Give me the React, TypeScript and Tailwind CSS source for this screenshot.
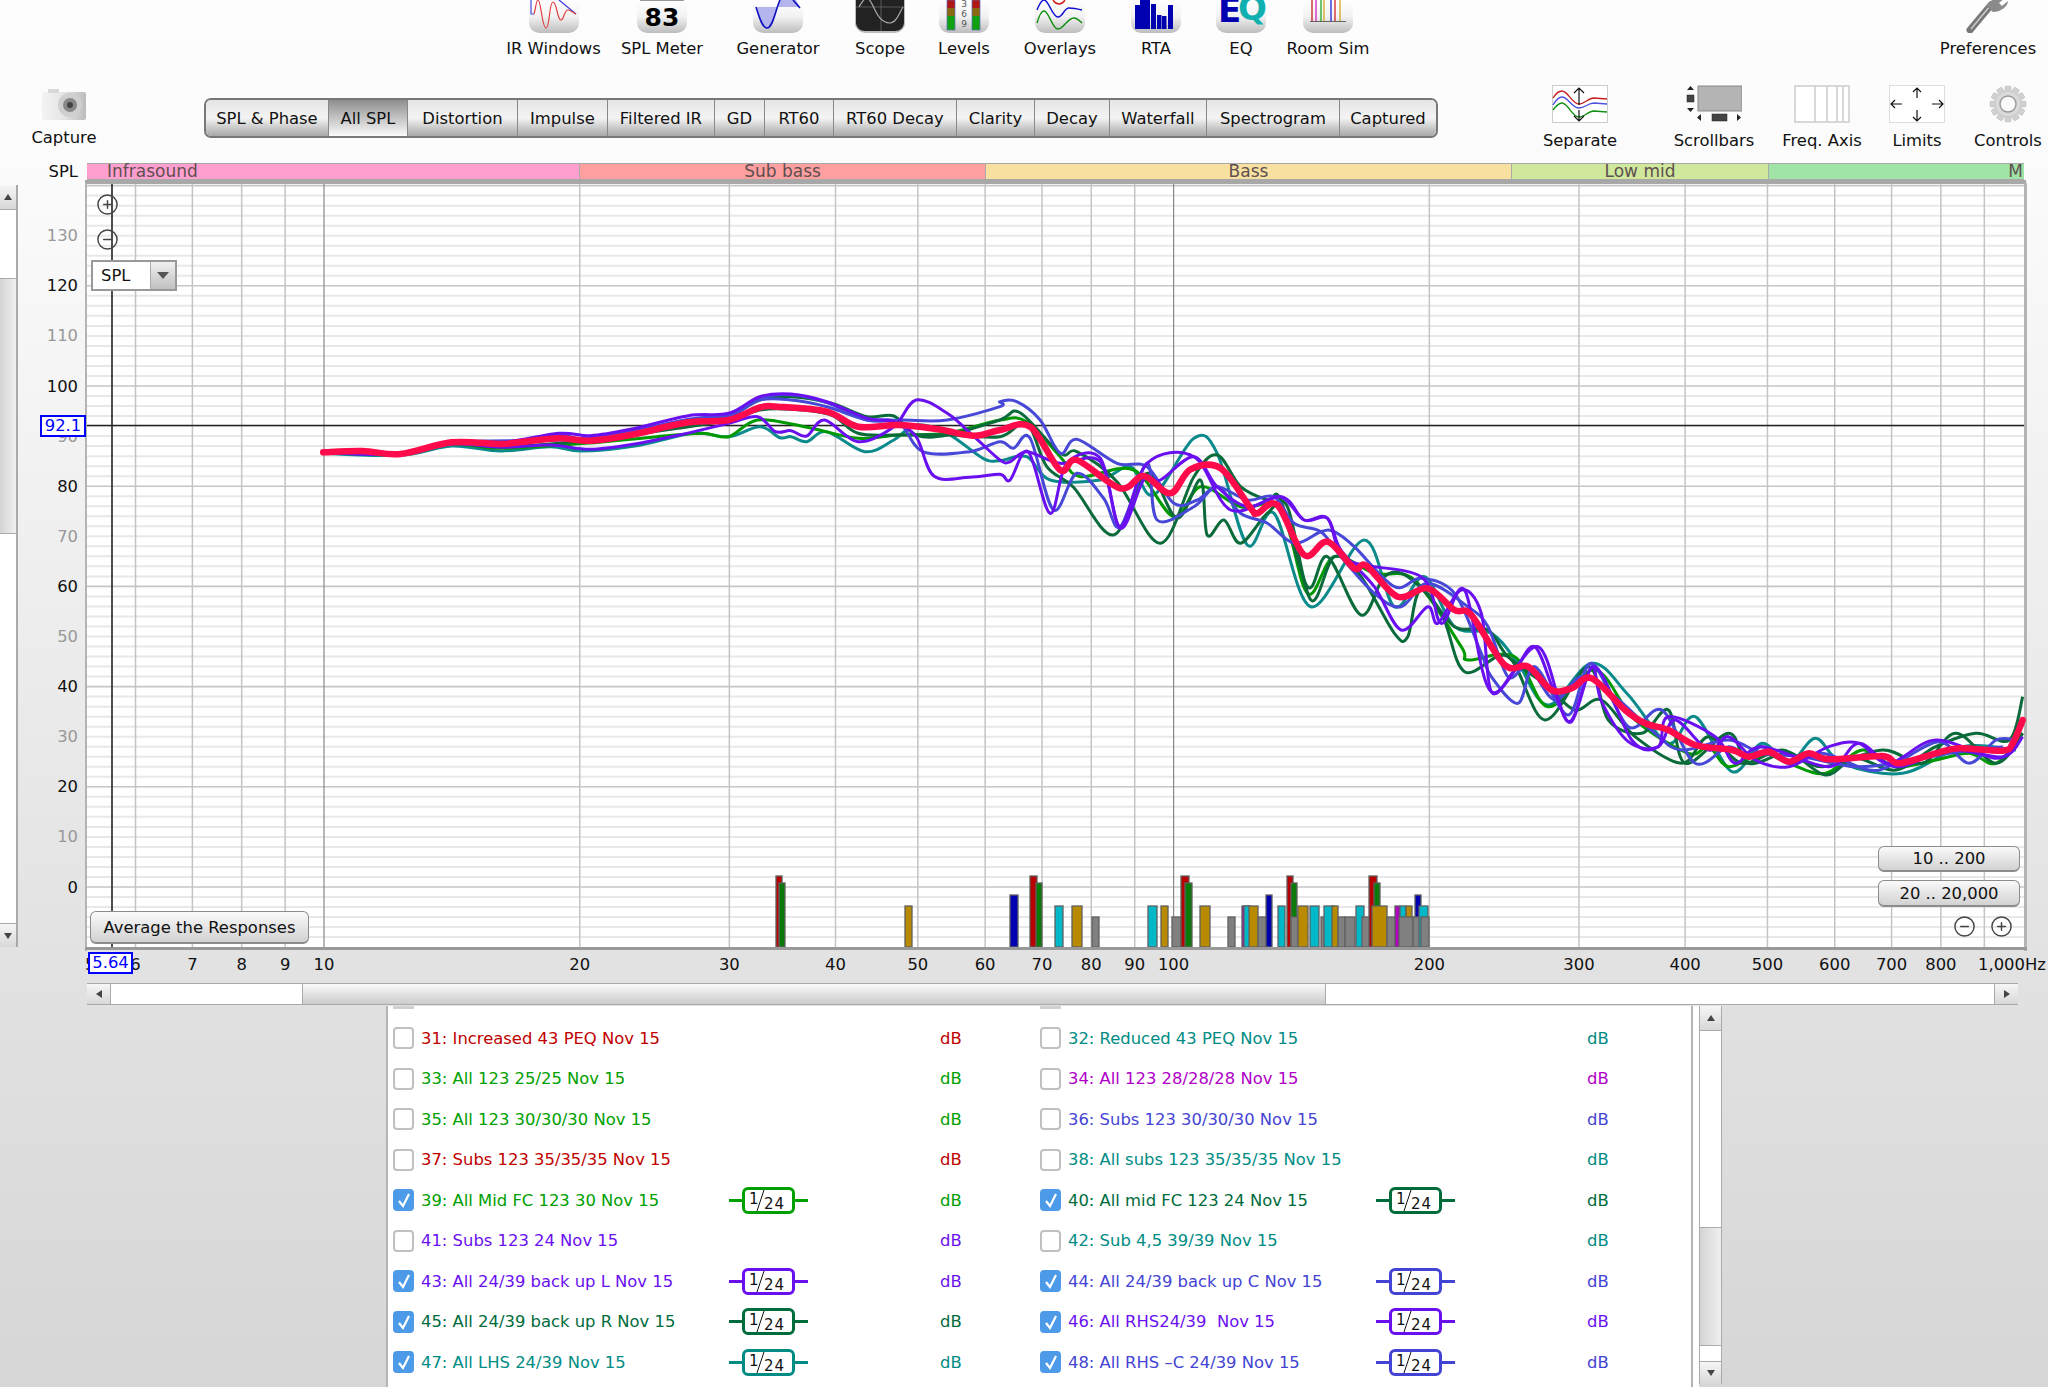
import React from 'react';
import { CirclePlus, CircleMinus } from 'lucide-react';

// ---------- chart helpers (page coordinates) ----------
const fx = (f: number) => 324 + 849.6 * (Math.log10(f) - 1);
const dy = (d: number) => 386 + (100 - d) * 5.01;

const smooth = (p: number[][]) => {
  let d = `M${p[0][0]} ${p[0][1]}`;
  for (let i = 0; i < p.length - 1; i++) {
    const a = p[Math.max(i - 1, 0)], b = p[i], c = p[i + 1], e = p[Math.min(i + 2, p.length - 1)];
    d += `C${(b[0] + (c[0] - a[0]) / 6).toFixed(1)} ${(b[1] + (c[1] - a[1]) / 6).toFixed(1)} ${(c[0] - (e[0] - b[0]) / 6).toFixed(1)} ${(c[1] - (e[1] - b[1]) / 6).toFixed(1)} ${c[0].toFixed(1)} ${c[1].toFixed(1)}`;
  }
  return d;
};

// points read off the two chart crops
const trace = (a: number[], b: number[]) => {
  const out: number[][] = [];
  for (let i = 0; i < a.length; i += 2) out.push([300 + a[i] / 2.24, 370 + a[i + 1] / 3]);
  for (let i = 0; i < b.length; i += 2) out.push([1000 + b[i] / 1.496, 400 + b[i + 1] / 3]);
  return out;
};

const curves: { c: string; p: number[][] }[] = [
  { c: '#0a8a8a', p: trace(
    [52,250,225,256,340,228,450,243,560,230,630,243,750,228,880,190,960,200,1030,170,1075,203,1100,200,1135,215,1180,185,1265,245,1330,210,1380,165,1450,190,1530,265,1568,272],
    [40,170,75,240,150,240,195,200,230,285,290,115,325,160,370,435,410,340,465,620,545,420,590,620,635,530,680,680,735,700,775,790,820,915,885,790,940,885,1000,1030,1040,950,1095,1115,1140,1030,1180,1090,1220,1015,1260,1090,1350,1120,1440,1040,1520,1050]) },
  { c: '#009a00', p: trace(
    [52,247,225,252,340,222,450,235,640,220,800,200,900,190,960,200,1025,150,1130,170,1250,205,1340,195,1450,190],
    [0,60,40,65,90,170,120,230,200,210,260,350,300,260,360,320,420,330,460,580,500,470,560,520,620,540,690,740,700,780,770,770,820,920,890,810,950,960,1030,1060,1060,1040,1090,1100,1140,1060,1180,1090,1235,1120,1290,1050,1340,1100,1400,1080,1450,1060,1490,1090,1530,1000]) },
  { c: '#0a6a3a', p: trace(
    [52,247,225,252,340,216,450,222,580,200,650,208,870,150,960,138,1030,90,1100,80,1190,100,1270,140,1330,138,1380,195,1450,195,1568,150],
    [30,38,90,160,115,155,175,245,240,430,290,230,325,165,360,260,400,300,420,300,460,560,490,470,540,645,575,530,610,530,660,640,695,815,760,770,815,960,880,800,910,960,960,1000,1000,930,1025,1090,1090,1000,1120,1090,1180,1060,1235,1125,1280,1075,1340,1110,1400,1040,1460,1000,1510,1020,1530,890]) },
  { c: '#0a6a3a', p: trace(
    [52,247,225,252,340,220,450,230,640,212,870,170,960,150,1030,120,1100,118,1190,135,1250,190,1340,195,1450,195],
    [0,110,40,70,70,200,110,262,170,405,220,220,265,355,300,240,310,405,335,360,360,430,400,340,430,320,465,600,500,470,540,530,590,700,610,710,630,570,680,680,730,690,760,770,820,860,860,930,900,900,950,1010,1020,1090,1060,1010,1110,1090,1170,1050,1230,1100,1320,1050,1380,1090,1430,1000,1490,1090,1530,1000]) },
  { c: '#4848d8', p: trace(
    [52,247,225,252,340,214,450,220,580,195,650,205,870,150,960,140,1030,90,1100,90,1180,110,1270,150,1340,155,1395,245,1500,245,1568,215],
    [20,145,45,115,80,330,115,220,155,295,180,380,220,190,235,360,290,320,325,260,360,340,400,370,440,430,480,395,500,395,530,440,590,560,630,535,680,580,720,760,735,830,775,910,800,800,850,945,885,790,940,980,990,930,1040,1090,1090,1040,1120,1075,1140,1040,1180,1090,1230,1060,1300,1110,1340,1090,1405,1025,1450,1090,1490,1020,1520,1020]) },
  { c: '#4848d8', p: trace(
    [52,247,225,252,340,216,650,205,870,148,960,135,1030,85,1100,74,1180,98,1270,150,1350,150,1450,150,1568,110],
    [0,5,25,5,60,60,90,160,115,118,175,190,220,200,260,310,295,300,325,260,370,300,410,290,440,370,480,395,510,470,560,580,600,620,640,550,700,620,730,680,760,830,790,800,830,900,870,830,920,890,980,1000,1020,1050,1090,1020,1140,1060,1200,1070,1280,1100,1350,1085,1420,1060,1500,1040]) },
  { c: '#6a10f0', p: trace(
    [52,247,225,252,340,213,450,218,580,190,650,197,740,178,870,137,960,130,1030,80,1100,72,1180,95,1270,145,1330,155,1380,200,1420,318,1500,322,1568,313],
    [15,240,42,155,75,340,100,190,150,175,180,385,215,240,240,240,290,170,325,260,370,320,420,290,455,360,490,355,510,450,560,560,600,690,640,620,655,670,690,570,720,640,735,875,770,810,800,740,830,880,855,965,885,800,900,905,940,1025,985,1040,1010,960,1060,1050,1090,1010,1130,1080,1180,1100,1240,1040,1285,1030,1330,1090,1400,1020,1490,1075,1520,1030]) },
  { c: '#6a10f0', p: trace(
    [52,247,225,252,340,222,450,232,560,225,650,238,750,222,850,195,960,160,1025,140,1065,185,1100,182,1135,198,1175,150,1250,215,1330,170,1380,90,1450,130,1510,200,1568,270],
    [15,185,40,155,90,190,150,185,180,380,220,190,290,170,345,330,420,290,455,360,490,355,520,480,630,530,660,670,695,570,735,875,805,740,850,965,890,800,945,1020,985,1040,1000,950,1070,1010,1100,1090,1140,1040,1240,1100,1285,1030,1340,1100,1420,1050,1500,1070,1530,1010]) },
];

const red = trace(
  [52,247,140,243,225,252,340,217,450,222,500,215,580,205,650,212,740,195,870,157,960,150,1030,112,1070,110,1180,125,1250,170,1340,165,1430,178,1510,197],
  [0,90,45,80,90,210,115,180,180,265,215,228,255,280,285,208,330,205,375,325,385,340,415,315,455,465,490,425,530,505,548,497,595,590,640,565,680,630,705,645,755,795,790,800,825,870,855,865,885,835,935,930,965,970,1000,990,1040,1035,1095,1050,1120,1070,1150,1055,1180,1085,1210,1060,1240,1078,1320,1068,1345,1090,1400,1060,1435,1045,1500,1052,1515,1030,1530,960]
);

const RED = '#b80000', GRN = '#0a7a0a', BLU = '#0000b0', ORG = '#b88a00', TEA = '#00b8c8', GRY = '#808080', MAG = '#b000c0';
// x1, x2, top y, fill
const bars: [number, number, number, string][] = [
  [776,782,876,RED],[779,785,883,GRN],[905,912,906,ORG],[1010,1018,895,BLU],
  [1030,1037,876,RED],[1036,1042,883,GRN],[1055,1063,906,TEA],[1072,1082,906,ORG],[1092,1099,917,GRY],
  [1148,1157,906,TEA],[1161,1168,906,ORG],[1172,1181,917,GRY],[1181,1189,876,RED],[1185,1192,883,GRN],[1200,1210,906,ORG],[1228,1235,917,GRY],
  [1242,1249,906,MAG],[1244,1250,906,TEA],[1249,1258,906,ORG],[1258,1266,917,GRY],[1266,1272,895,BLU],[1278,1285,906,TEA],
  [1287,1293,876,RED],[1291,1297,883,GRN],[1291,1298,917,GRY],[1298,1308,906,ORG],[1310,1319,906,TEA],[1321,1326,917,GRY],[1324,1334,906,TEA],[1332,1338,906,ORG],
  [1338,1345,917,GRY],[1345,1355,917,GRY],[1356,1364,906,TEA],[1362,1371,917,GRY],[1369,1377,876,RED],[1374,1380,883,GRN],[1372,1387,906,ORG],[1387,1395,917,GRY],
  [1395,1400,906,MAG],[1400,1406,906,TEA],[1406,1412,906,ORG],[1399,1413,917,GRY],[1415,1421,895,BLU],[1413,1421,917,GRY],[1419,1428,906,TEA],[1421,1429,917,GRY],
];

const minorDb = Array.from({ length: 77 }, (_, i) => -12 + i * 2);
const gridHz = [6,7,8,9,20,30,40,50,60,70,80,90,200,300,400,500,600,700,800,900];
const xLabels = [6,7,8,9,10,20,30,40,50,60,70,80,90,100,200,300,400,500,600,700,800];
const yLabels = [130,120,110,100,90,80,70,60,50,40,30,20,10,0];

const Chart = () => (
  <svg width={2030} height={803} viewBox="18 180 2030 803" className="block shrink-0">
    <rect x={85} y={180} width={1941} height={5} fill="#a8a8a8" />
    <rect x={85} y={183} width={2} height={768} fill="#b4b4b4" />
    <rect x={2024} y={183} width={3} height={768} fill="#b4b4b4" />
    <rect x={87} y={184} width={1937} height={763} fill="#fff" />
    {minorDb.filter(d => dy(d) > 184 && dy(d) < 947).map(d => (
      <line key={d} x1={87} x2={2024} y1={dy(d)} y2={dy(d)} stroke={d % 20 === 0 ? '#c6c6c6' : '#e8e8e8'} strokeWidth={d % 20 === 0 ? 1.6 : 2} />
    ))}
    {gridHz.map(f => <line key={f} x1={fx(f)} x2={fx(f)} y1={184} y2={947} stroke="#c4c4c4" strokeWidth={1.5} />)}
    {[10, 100].map(f => <line key={f} x1={fx(f)} x2={fx(f)} y1={184} y2={947} stroke="#888" strokeWidth={1.2} />)}
    <line x1={112} x2={112} y1={184} y2={947} stroke="#222" strokeWidth={1.6} />
    {bars.map((b, i) => <rect key={i} x={b[0]} y={b[2]} width={b[1] - b[0]} height={947 - b[2]} fill={b[3]} stroke="#606060" strokeWidth={1.3} />)}
    <line x1={87} x2={2024} y1={425.5} y2={425.5} stroke="#222" strokeWidth={1.6} />
    {curves.map((c, i) => <path key={i} d={smooth(c.p)} fill="none" stroke={c.c} strokeWidth={3} strokeLinejoin="round" />)}
    <path d={smooth(red)} fill="none" stroke="#ff0a4a" strokeWidth={6.5} strokeLinejoin="round" strokeLinecap="round" />
    <rect x={85} y={947} width={1942} height={3} fill="#999" />
    {yLabels.map(d => (
      <text key={d} x={78} y={dy(d) + 5.5} textAnchor="end" fontSize={16.4} fill={d % 20 === 0 ? '#111' : '#999'}>{d}</text>
    ))}
    <text x={85} y={970} fontSize={16.4} fill="#111">5</text>
    {xLabels.map(f => (
      <text key={f} x={fx(f)} y={970} textAnchor="middle" fontSize={16.4} fill="#111">{f}</text>
    ))}
    <text x={1978} y={970} fontSize={16.4} fill="#111">1,000Hz</text>
  </svg>
);

// ---------- toolbar icons ----------
const IconFace = ({ children, dark }: { children: React.ReactNode; dark?: boolean }) => (
  <div className={dark
    ? 'h-[33px] w-[50px] overflow-hidden rounded-b-[10px] border-x border-b-2 border-[#bbb] bg-[#222]'
    : 'h-[33px] w-[50px] overflow-hidden rounded-b-[10px] bg-gradient-to-b from-white via-[#f2f2f2] to-[#bdbdbd]'}>
    <svg width={50} height={33} viewBox="0 0 50 33" className="block">{children}</svg>
  </div>
);

const IrIcon = () => (
  <IconFace>
    <path d="M2 0V14H5" fill="none" stroke="#4a4ae0" strokeWidth={1.2} />
    <path d="M30 0L47 14" fill="none" stroke="#3a3ae0" strokeWidth={1.2} />
    <path d="M5 14C7 8 7 0 9 0C12 0 13 28 17 28C21 28 20 2 24 2C28 2 28 20 32 20C35 20 35 10 39 10C42 10 44 13 47 14" fill="none" stroke="#e04040" strokeWidth={1.2} />
  </IconFace>
);
const MeterIcon = () => (
  <IconFace>
    <rect x={3} y={0} width={44} height={1} fill="#999" />
    <text x={25} y={26} textAnchor="middle" fontSize={25} fontWeight={700} fill="#000">83</text>
  </IconFace>
);
const GeneratorIcon = () => (
  <IconFace>
    <path d="M3 7C6 16 9 28 14 28C20 28 23 8 27 0L43 0L47 7Z" fill="#b4b4ee" />
    <path d="M3 7C6 16 9 28 14 28C20 28 23 8 27 0M40 0L47 8" fill="none" stroke="#1010c0" strokeWidth={1.6} />
  </IconFace>
);
const ScopeIcon = () => (
  <IconFace dark>
    <line x1={0} x2={50} y1={7} y2={7} stroke="#666" strokeWidth={0.8} />
    <line x1={25} x2={25} y1={0} y2={31} stroke="#666" strokeWidth={0.8} />
    <path d="M3 7C6 2 8 -2 11 -2C17 -2 19 23 34 23C40 23 43 14 47 7" fill="none" stroke="#aaa" strokeWidth={1.2} />
  </IconFace>
);
const LevelsIcon = () => (
  <IconFace>
    {[8, 33].map(x => (
      <g key={x}>
        <rect x={x} y={0} width={8} height={8} fill="#b01818" />
        <rect x={x} y={8} width={8} height={8} fill="#8a6a10" />
        <rect x={x} y={16} width={8} height={14} fill="#10a010" />
        <rect x={x} y={0} width={8} height={30} fill="none" stroke="#5a6ac0" strokeWidth={0.7} />
      </g>
    ))}
    {[[3, '3'], [13, '6'], [23, '9']].map(([y, t]) => (
      <text key={t as string} x={25} y={(y as number) + 4} textAnchor="middle" fontSize={9} fill="#555">{t}</text>
    ))}
  </IconFace>
);
const OverlaysIcon = () => (
  <IconFace>
    <path d="M18 0C20 3 22 4 24 4C26 4 28 3 30 0" fill="none" stroke="#d02020" strokeWidth={1.4} />
    <path d="M2 10C4 5 6 0 9 0C14 0 17 17 23 17C28 17 29 8 34 8C39 8 43 9 47 10" fill="none" stroke="#1010d0" strokeWidth={1.4} />
    <path d="M2 23C4 16 6 11 9 11C14 11 17 29 23 29C29 29 32 18 39 18C42 18 45 21 47 23" fill="none" stroke="#109010" strokeWidth={1.4} />
  </IconFace>
);
const RtaIcon = () => (
  <IconFace>
    {[[4, 5], [9, 0], [14, 0], [20, 4], [26, 15], [31, 16], [37, 5]].map(([x, t]) => (
      <rect key={x} x={x} y={t} width={x === 26 || x === 31 ? 4.5 : 5} height={29 - t} fill="#0000b0" />
    ))}
  </IconFace>
);
const EqIcon = () => (
  <IconFace>
    <text x={2} y={22} fontSize={34} fontWeight={700} fill="#0000b0">E</text>
    <text x={22} y={20} fontSize={34} fontWeight={700} fill="#10b0b0">Q</text>
  </IconFace>
);
const RoomIcon = () => (
  <IconFace>
    {[[9, '#c01010'], [13, '#d010c0'], [18, '#10a010'], [21, '#d0a010'], [28, '#1010d0'], [32, '#d01010'], [37, '#d0a010']].map(([x, c]) => (
      <line key={x as number} x1={x as number} x2={x as number} y1={0} y2={21} stroke={c as string} strokeWidth={1.2} />
    ))}
    <line x1={7} x2={43} y1={21.5} y2={21.5} stroke="#666" strokeWidth={1} />
  </IconFace>
);
const WrenchIcon = () => (
  <svg width={44} height={33} viewBox="0 0 44 33" className="block">
    <path d="M4 30L25 5" stroke="#777" strokeWidth={7} strokeLinecap="round" />
    <path d="M5 29L24 6" stroke="#ccc" strokeWidth={1.5} />
    <path d="M20 6C24 0 30 -3 40 -3L33 3L36 6L42 1C42 7 34 12 27 12Z" fill="#8a8a8a" />
  </svg>
);
const CameraIcon = () => (
  <svg width={47} height={33} viewBox="0 0 47 33" className="block">
    <defs>
      <linearGradient id="cam" x1="0" x2="1"><stop offset="0" stopColor="#f4f4f4" /><stop offset="0.5" stopColor="#e4e4e4" /><stop offset="1" stopColor="#bcbcbc" /></linearGradient>
    </defs>
    <rect x={2} y={4} width={44} height={28} rx={2} fill="url(#cam)" />
    <rect x={8} y={1} width={11} height={4} fill="#d8d8d8" />
    <circle cx={30} cy={17} r={12} fill="#cfcfcf" />
    <circle cx={30} cy={17} r={7} fill="#888" />
    <circle cx={30} cy={17} r={3} fill="#444" />
  </svg>
);
const SeparateIcon = () => (
  <svg width={56} height={38} viewBox="0 0 56 38" className="block">
    <rect x={0.5} y={0.5} width={55} height={37} fill="#fff" stroke="#ccc" />
    <path d="M1 13C4 8 7 6 10 6C16 6 20 19 27 19C33 19 36 13 42 13L55 14" fill="none" stroke="#c82020" strokeWidth={1.4} />
    <path d="M1 20C4 15 7 12 10 12C16 12 20 23 27 23C33 23 36 18 42 18L55 19" fill="none" stroke="#5050e0" strokeWidth={1.4} />
    <path d="M1 25C4 21 7 18 10 18C16 18 20 32 27 32C33 32 36 26 42 26L55 27" fill="none" stroke="#109010" strokeWidth={1.4} />
    <path d="M27 20V3M22 8L27 3L32 8M27 25V36M22 31L27 36L32 31" fill="none" stroke="#111" strokeWidth={1.2} />
  </svg>
);
const ScrollbarsIcon = () => (
  <svg width={56} height={38} viewBox="0 0 56 38" className="block">
    <rect x={12} y={1} width={44} height={25} fill="#b4b4b4" stroke="#888" />
    <path d="M1 5L4.5 1L8 5ZM1 23H8L4.5 27Z" fill="#222" />
    <rect x={1} y={10} width={7} height={7} fill="#444" stroke="#222" strokeWidth={0.5} />
    <path d="M15 29V36L11 32.5ZM51 29V36L55 32.5Z" fill="#222" />
    <rect x={26} y={29} width={15} height={7} fill="#444" stroke="#222" strokeWidth={0.5} />
  </svg>
);
const FreqIcon = () => (
  <svg width={56} height={38} viewBox="0 0 56 38" className="block">
    <rect x={1} y={1} width={54} height={36} fill="#fff" stroke="#ccc" strokeWidth={1.5} />
    {[21, 33, 43, 49].map(x => <line key={x} x1={x} x2={x} y1={1} y2={37} stroke="#ccc" strokeWidth={1.5} />)}
  </svg>
);
const LimitsIcon = () => (
  <svg width={56} height={38} viewBox="0 0 56 38" className="block">
    <rect x={0.5} y={0.5} width={55} height={37} fill="#fff" stroke="#ddd" />
    <path d="M28 13V3M24 7L28 3L32 7M28 25V36M24 32L28 36L32 32M13 19H2M6 15L2 19L6 23M43 19H54M50 15L54 19L50 23" fill="none" stroke="#111" strokeWidth={1.2} />
  </svg>
);
const GearIcon = () => (
  <svg width={38} height={38} viewBox="0 0 38 38" className="block">
    {Array.from({ length: 12 }, (_, i) => (
      <rect key={i} x={16} y={1} width={6} height={8} rx={1} fill="#d0d0d0" stroke="#b8b8b8" strokeWidth={0.5} transform={`rotate(${i * 30} 19 19)`} />
    ))}
    <circle cx={19} cy={19} r={13} fill="#dadada" stroke="#b8b8b8" strokeWidth={0.5} />
    <circle cx={19} cy={19} r={8} fill="#fafafa" stroke="#999" strokeWidth={1.4} />
  </svg>
);

const topTools = [
  { w: 'w-[101px]', label: 'IR Windows', icon: <IrIcon /> },
  { w: 'w-[116px]', label: 'SPL Meter', icon: <MeterIcon /> },
  { w: 'w-[116px]', label: 'Generator', icon: <GeneratorIcon /> },
  { w: 'w-[88px]', label: 'Scope', icon: <ScopeIcon /> },
  { w: 'w-[80px]', label: 'Levels', icon: <LevelsIcon /> },
  { w: 'w-[112px]', label: 'Overlays', icon: <OverlaysIcon /> },
  { w: 'w-[80px]', label: 'RTA', icon: <RtaIcon /> },
  { w: 'w-[90px]', label: 'EQ', icon: <EqIcon /> },
  { w: 'w-[84px]', label: 'Room Sim', icon: <RoomIcon /> },
];

const tabs = [
  { w: 'w-[123px]', label: 'SPL & Phase' },
  { w: 'w-[79px]', label: 'All SPL', active: true },
  { w: 'w-[110px]', label: 'Distortion' },
  { w: 'w-[90px]', label: 'Impulse' },
  { w: 'w-[107px]', label: 'Filtered IR' },
  { w: 'w-[50px]', label: 'GD' },
  { w: 'w-[69px]', label: 'RT60' },
  { w: 'w-[123px]', label: 'RT60 Decay' },
  { w: 'w-[78px]', label: 'Clarity' },
  { w: 'w-[75px]', label: 'Decay' },
  { w: 'w-[97px]', label: 'Waterfall' },
  { w: 'w-[133px]', label: 'Spectrogram' },
  { w: 'flex-1', label: 'Captured' },
];

const viewTools = [
  { cls: 'ml-[102px] w-[80px]', label: 'Separate', icon: <SeparateIcon /> },
  { cls: 'ml-[44px] w-[100px]', label: 'Scrollbars', icon: <ScrollbarsIcon /> },
  { cls: 'ml-[8px] w-[100px]', label: 'Freq. Axis', icon: <FreqIcon /> },
  { cls: 'ml-[10px] w-[70px]', label: 'Limits', icon: <LimitsIcon /> },
  { cls: 'ml-[16px] w-[80px]', label: 'Controls', icon: <GearIcon /> },
];

// ---------- measurement list ----------
const tones = {
  red: { text: 'text-[#c00000]', border: 'border-[#c00000]', bg: 'bg-[#c00000]' },
  green: { text: 'text-[#00a000]', border: 'border-[#00a000]', bg: 'bg-[#00a000]' },
  teal: { text: 'text-[#008c84]', border: 'border-[#008c84]', bg: 'bg-[#008c84]' },
  magenta: { text: 'text-[#b000c8]', border: 'border-[#b000c8]', bg: 'bg-[#b000c8]' },
  blue: { text: 'text-[#4444d4]', border: 'border-[#4444d4]', bg: 'bg-[#4444d4]' },
  dark: { text: 'text-[#006c3c]', border: 'border-[#006c3c]', bg: 'bg-[#006c3c]' },
  purple: { text: 'text-[#6a10f0]', border: 'border-[#6a10f0]', bg: 'bg-[#6a10f0]' },
};

type Tone = keyof typeof tones;
const rows: { label: string; tone: Tone; on?: boolean }[] = [
  { label: '31: Increased 43 PEQ Nov 15', tone: 'red' },
  { label: '32: Reduced 43 PEQ Nov 15', tone: 'teal' },
  { label: '33: All 123 25/25 Nov 15', tone: 'green' },
  { label: '34: All 123 28/28/28 Nov 15', tone: 'magenta' },
  { label: '35: All 123 30/30/30 Nov 15', tone: 'green' },
  { label: '36: Subs 123 30/30/30 Nov 15', tone: 'blue' },
  { label: '37: Subs 123 35/35/35 Nov 15', tone: 'red' },
  { label: '38: All subs 123 35/35/35 Nov 15', tone: 'teal' },
  { label: '39: All Mid FC 123 30 Nov 15', tone: 'green', on: true },
  { label: '40: All mid FC 123 24 Nov 15', tone: 'dark', on: true },
  { label: '41: Subs 123 24 Nov 15', tone: 'purple' },
  { label: '42: Sub 4,5 39/39 Nov 15', tone: 'teal' },
  { label: '43: All 24/39 back up L Nov 15', tone: 'purple', on: true },
  { label: '44: All 24/39 back up C Nov 15', tone: 'blue', on: true },
  { label: '45: All 24/39 back up R Nov 15', tone: 'dark', on: true },
  { label: '46: All RHS24/39  Nov 15', tone: 'purple', on: true },
  { label: '47: All LHS 24/39 Nov 15', tone: 'teal', on: true },
  { label: '48: All RHS –C 24/39 Nov 15', tone: 'blue', on: true },
];

const SmoothBadge = ({ tone }: { tone: Tone }) => (
  <div className="flex h-[27px] w-[79px] items-center">
    <div className={`h-[3px] w-[13px] ${tones[tone].bg}`} />
    <div className={`h-[27px] w-[53px] rounded-[6px] border-[3px] bg-white ${tones[tone].border}`}>
      <svg width={47} height={21} viewBox="0 0 47 21" className="block overflow-visible">
        <text x={4} y={14} fontSize={15} fill="#111">1</text>
        <line x1={19} y1={0} x2={12} y2={21} stroke="#111" strokeWidth={1} />
        <text x={19} y={19} fontSize={15} fill="#111" letterSpacing={1}>24</text>
      </svg>
    </div>
    <div className={`h-[3px] w-[13px] ${tones[tone].bg}`} />
  </div>
);

const Check = ({ on }: { on?: boolean }) => on ? (
  <div className="flex h-[22px] w-[21px] shrink-0 items-center justify-center rounded-[4px] bg-[#4d9be8]">
    <svg width={14} height={16} viewBox="0 0 14 16"><path d="M2 9L6 14L12 2" fill="none" stroke="#fff" strokeWidth={2.2} /></svg>
  </div>
) : (
  <div className="h-[22px] w-[21px] shrink-0 rounded-[4px] border-2 border-[#c0c0c0] bg-white" />
);

const Arrow = ({ dir }: { dir: 'up' | 'down' | 'left' | 'right' }) => {
  const shape = { up: 'M1 8L5 2L9 8Z', down: 'M1 2L5 8L9 2Z', left: 'M8 1L2 5L8 9Z', right: 'M2 1L8 5L2 9Z' }[dir];
  return <svg width={10} height={10} viewBox="0 0 10 10"><path d={shape} fill="#444" /></svg>;
};

const btnV = 'flex w-full shrink-0 items-center justify-center border-[#aaa] bg-gradient-to-b from-[#f6f6f6] to-[#d8d8d8]';
const btnH = 'flex h-full shrink-0 items-center justify-center border-[#aaa] bg-gradient-to-b from-[#f6f6f6] to-[#d8d8d8]';
const pillBtn = 'absolute flex items-center justify-center rounded-[6px] border border-b-2 border-[#8c8c8c] bg-gradient-to-b from-[#fafafa] to-[#d2d2d2] text-[#111]';

export default function App() {
  return (
    <div className="h-[1387px] w-[2048px] overflow-hidden bg-[linear-gradient(180deg,#fdfdfd_0px,#fbfbfb_180px,#e2e2e2_960px,#d6d6d6_1387px)] font-['DejaVu_Sans',sans-serif] text-[16.4px] leading-[20px] text-[#111]">
      {/* top toolbar */}
      <div className="flex h-[76px] pl-[503px] pr-[10px]">
        {topTools.map(t => (
          <div key={t.label} className={`flex flex-col items-center ${t.w}`}>
            {t.icon}
            <span className="mt-[6px] whitespace-nowrap">{t.label}</span>
          </div>
        ))}
        <div className="ml-auto flex w-[100px] flex-col items-center">
          <WrenchIcon />
          <span className="mt-[6px]">Preferences</span>
        </div>
      </div>

      {/* second toolbar */}
      <div className="flex h-[87px] pl-[14px]">
        <div className="flex w-[100px] flex-col items-center pt-[12px]">
          <CameraIcon />
          <span className="mt-[7px]">Capture</span>
        </div>
        <div className="ml-[90px] mt-[22px] flex h-[40px] w-[1235px] overflow-hidden rounded-[7px] border-2 border-[#777]">
          {tabs.map(t => (
            <div key={t.label} className={`flex items-center justify-center border-r border-[#888] pt-px last:border-r-0 ${t.w} ${t.active
              ? 'bg-gradient-to-b from-[#8e8e8e] via-[#c4c4c4] to-[#fafafa]'
              : 'bg-gradient-to-b from-[#e4e4e4] via-[#f4f4f4] to-[#a8a8a8]'}`}>
              {t.label}
            </div>
          ))}
        </div>
        {viewTools.map(t => (
          <div key={t.label} className={`flex shrink-0 flex-col items-center pt-[9px] ${t.cls}`}>
            {t.icon}
            <span className="mt-[8px] whitespace-nowrap">{t.label}</span>
          </div>
        ))}
      </div>

      {/* frequency bands */}
      <div className="flex h-[17px] items-center">
        <div className="w-[78px] shrink-0 text-right">SPL</div>
        <div className="ml-[9px] flex h-[17px] w-[1937px] border-y border-[#a8a8a8] text-[17px] leading-[15px] text-[#5e5050]">
          <div className="w-[492px] bg-[#ff9fcf] pl-[20px]">Infrasound</div>
          <div className="w-[406px] border-l border-[#aaa] bg-[#ff9f9f] text-center">Sub bass</div>
          <div className="w-[526px] border-l border-[#aaa] bg-[#f8e0a0] text-center">Bass</div>
          <div className="w-[257px] border-l border-[#aaa] bg-[#d0e89c] text-center">Low mid</div>
          <div className="flex-1 border-l border-[#aaa] bg-[#a0e4a8] pr-[1px] text-right">M</div>
        </div>
      </div>

      {/* chart */}
      <div className="relative flex h-[803px]">
        <div className="mt-[5px] flex h-[762px] w-[18px] shrink-0 flex-col border-r-2 border-[#aaa] bg-white">
          <div className={`${btnV} h-[25px] border-b`}><Arrow dir="up" /></div>
          <div className="h-[68px]" />
          <div className="h-[256px] border-y border-[#aaa] bg-gradient-to-r from-[#d4d4d4] to-[#f0f0f0]" />
          <div className="flex-1" />
          <div className={`${btnV} h-[24px] border-t`}><Arrow dir="down" /></div>
        </div>
        <Chart />

        <CirclePlus size={23} strokeWidth={1.5} className="absolute left-[96px] top-[13px] text-[#444]" />
        <CircleMinus size={23} strokeWidth={1.5} className="absolute left-[96px] top-[48px] text-[#444]" />

        <div className="absolute left-[91px] top-[80px] flex h-[31px] w-[86px] border-2 border-[#999] bg-white">
          <span className="flex-1 pl-[8px] leading-[27px]">SPL</span>
          <div className="flex w-[25px] items-center justify-center border-l border-[#aaa] bg-gradient-to-b from-[#f0f0f0] to-[#c0c0c0]">
            <svg width={14} height={9} viewBox="0 0 14 9"><path d="M1 1H13L7 8Z" fill="#555" /></svg>
          </div>
        </div>

        <div className="absolute left-[40px] top-[235px] flex h-[22px] w-[46px] items-center justify-center border-2 border-[#0000ff] bg-white text-[#0000ff]">92.1</div>
        <div className="absolute left-[88px] top-[772px] flex h-[22px] w-[45px] items-center justify-center border-2 border-[#0000ff] bg-white text-[#0000ff]">5.64</div>

        <div className={`${pillBtn} left-[90px] top-[731px] h-[33px] w-[219px] pt-px`}>Average the Responses</div>
        <div className={`${pillBtn} left-[1878px] top-[666px] h-[26px] w-[142px] pt-px`}>10 .. 200</div>
        <div className={`${pillBtn} left-[1878px] top-[700px] h-[27px] w-[142px] pt-px`}>20 .. 20,000</div>
        <CircleMinus size={23} strokeWidth={1.5} className="absolute left-[1953px] top-[735px] text-[#444]" />
        <CirclePlus size={23} strokeWidth={1.5} className="absolute left-[1990px] top-[735px] text-[#444]" />
      </div>

      {/* horizontal scrollbar */}
      <div className="ml-[87px] flex h-[22px] w-[1931px] border-y border-[#aaa] bg-white">
        <div className={`${btnH} w-[24px] border-r`}><Arrow dir="left" /></div>
        <div className="w-[191px]" />
        <div className="w-[1024px] border-x border-[#aaa] bg-gradient-to-b from-[#fafafa] to-[#cccccc]" />
        <div className="flex-1" />
        <div className={`${btnH} w-[24px] border-l`}><Arrow dir="right" /></div>
      </div>

      {/* measurement list */}
      <div className="ml-[386px] mt-px flex h-[381px]">
        <div className="w-[1307px] shrink-0 border-x-2 border-[#b4b4b4] bg-white pl-[5px]">
          <div className="grid grid-cols-[647px_647px]">
            <div className="h-[12px]"><div className="h-[3px] w-[21px] bg-[#d0d0d0]" /></div>
            <div className="h-[12px]"><div className="h-[3px] w-[21px] bg-[#d0d0d0]" /></div>
            {rows.map(r => (
              <div key={r.label} className={`flex h-[40.5px] items-center ${tones[r.tone].text}`}>
                <Check on={r.on} />
                <span className="w-[315px] shrink-0 whitespace-pre pl-[7px] pt-px">{r.label}</span>
                <div className="w-[211px] shrink-0">{r.on && <SmoothBadge tone={r.tone} />}</div>
                <span className="pt-px">dB</span>
              </div>
            ))}
          </div>
        </div>
        <div className="w-[6px] bg-white" />
        <div className="flex h-[378px] w-[23px] flex-col border-x border-[#aaa] bg-white">
          <div className={`${btnV} h-[25px] border-b`}><Arrow dir="up" /></div>
          <div className="h-[196px]" />
          <div className="h-[119px] border-y border-[#aaa] bg-gradient-to-r from-[#d4d4d4] to-[#f0f0f0]" />
          <div className="flex-1" />
          <div className={`${btnV} h-[23px] border-t`}><Arrow dir="down" /></div>
        </div>
      </div>
    </div>
  );
}
